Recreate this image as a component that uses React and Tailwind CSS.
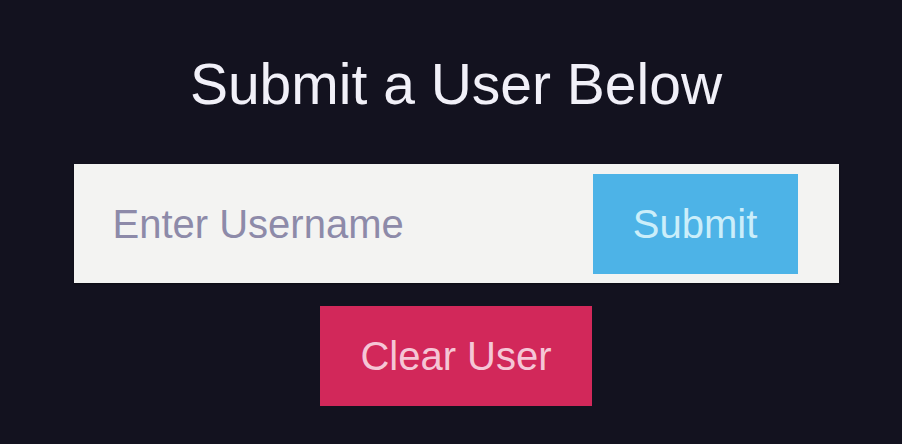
export default function App() {
  return (
    <div className="h-[444px] w-full bg-[#13121f] flex flex-col items-center pl-[10px] pt-[56px] font-['Liberation_Sans',Arial,sans-serif]">
      <h1 className="text-[57px] leading-none text-[#f1f0f8]">Submit a User Below</h1>
      <form
        className="mt-[51px] w-[765px] h-[119px] bg-[#f3f3f2] flex items-center shadow-[0_1px_2px_rgba(0,0,0,0.4)]"
        onSubmit={(e) => e.preventDefault()}
      >
        <input
          type="text"
          placeholder="Enter Username"
          className="flex-1 min-w-0 bg-transparent pl-[39px] text-[40px] text-[#3a3850] placeholder:text-[#8d8aa9] outline-none"
        />
        <button
          type="submit"
          className="mr-[41px] w-[205px] h-[100px] bg-[#4db3e7] text-[40px] text-[#cbeefa]"
        >
          Submit
        </button>
      </form>
      <button className="mt-[23px] w-[272px] h-[100px] bg-[#d2285a] text-[40px] text-[#f5c6d6]">
        Clear User
      </button>
    </div>
  );
}
